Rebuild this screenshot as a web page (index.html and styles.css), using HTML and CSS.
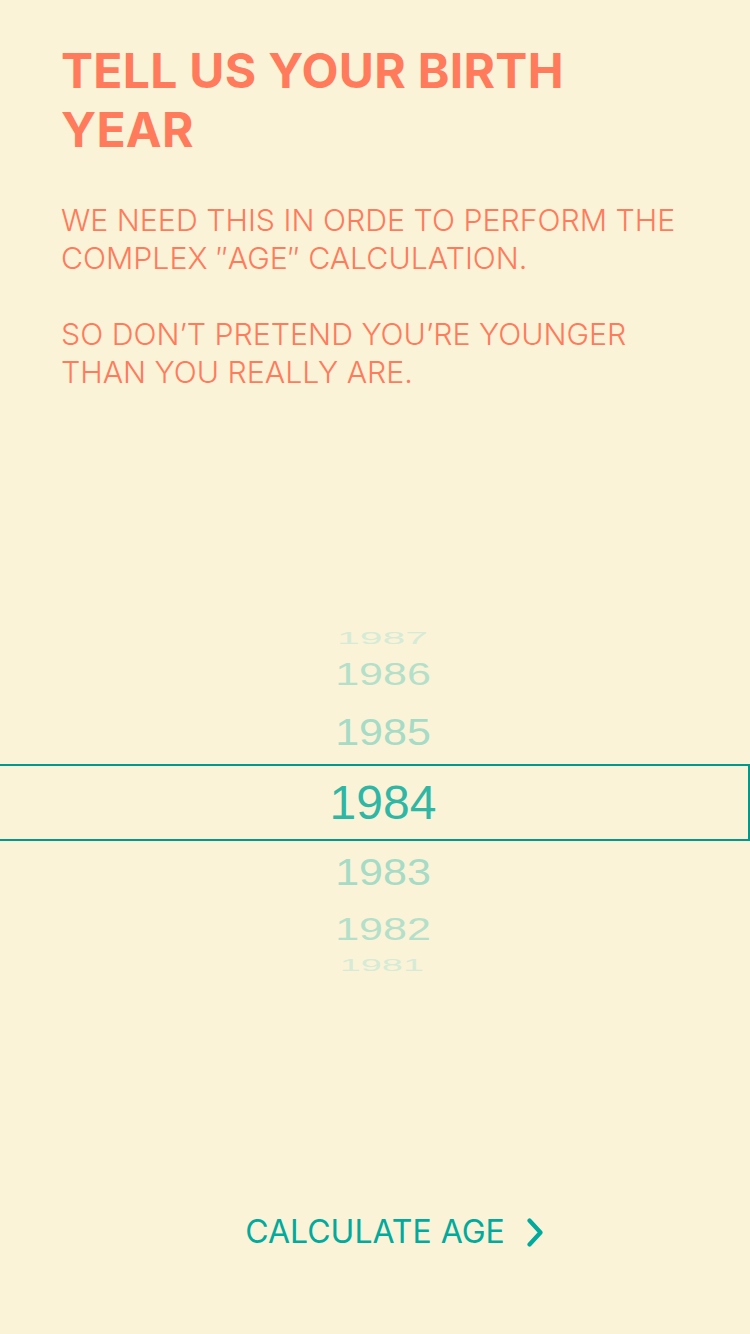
FILE: index.html
```html
<!DOCTYPE html>
<html lang="en">
<head>
<meta charset="utf-8">
<title>Birth year</title>
<link rel="stylesheet" href="styles.css">
</head>
<body>
<main class="screen">
  <header class="intro">
    <h1 class="title">TELL US YOUR BIRTH YEAR</h1>
    <p class="copy">WE NEED THIS IN ORDE TO PERFORM THE COMPLEX ″AGE″ CALCULATION.</p>
    <p class="copy copy-second">SO DON’T PRETEND YOU’RE YOUNGER THAN YOU REALLY ARE.</p>
  </header>

  <section class="picker" aria-label="Birth year">
    <div class="row row-far row-far-top"><span class="year">1987</span></div>
    <div class="row row-mid row-mid-top"><span class="year">1986</span></div>
    <div class="row row-near row-near-top"><span class="year">1985</span></div>
    <div class="row row-selected"><span class="year">1984</span></div>
    <div class="row row-near row-near-bottom"><span class="year">1983</span></div>
    <div class="row row-mid row-mid-bottom"><span class="year">1982</span></div>
    <div class="row row-far row-far-bottom"><span class="year">1981</span></div>
  </section>

  <footer class="actions">
    <button class="calc" type="button">
      <span class="calc-label">CALCULATE AGE</span>
      <svg class="chevron" width="16" height="29" viewBox="0 0 16 29" aria-hidden="true">
        <path d="M2.5 2.5 L13.5 14.5 L2.5 26.5" fill="none" stroke="currentColor" stroke-width="4.2" stroke-linecap="round" stroke-linejoin="round"/>
      </svg>
    </button>
  </footer>
</main>
</body>
</html>
```

FILE: styles.css
```css
html, body {
  margin: 0;
  padding: 0;
  background: #fbf3d8;
}

.screen {
  width: 750px;
  height: 1334px;
  overflow: hidden;
  display: flex;
  flex-direction: column;
  background: #fbf3d8;
}

.intro {
  padding: 41px 40px 0 61px;
}

.title {
  margin: 0;
  font-family: Inter, Roboto, "Liberation Sans", sans-serif;
  font-weight: 700;
  font-size: 48px;
  line-height: 59px;
  color: #ff7b5c;
  letter-spacing: 0.3px;
  width: 580px;
}

.copy {
  margin: 42px 0 0 0;
  font-family: Inter, Roboto, "Liberation Sans", sans-serif;
  font-weight: 300;
  font-size: 30.3px;
  line-height: 38px;
  color: #ff7b5c;
}

.copy-second {
  margin-top: 38px;
}

.picker {
  margin-top: 237px;
  display: flex;
  flex-direction: column;
}

.row {
  display: flex;
  align-items: center;
  justify-content: center;
  font-family: "Liberation Sans", Arial, sans-serif;
  font-size: 43px;
  line-height: 1;
}

.year {
  display: block;
  line-height: 1;
  padding-left: 16px;
}

.row-far { height: 20px; color: #d5ebd5; }
.row-mid { height: 52px; color: #b4e0ca; }
.row-near { height: 64px; color: #a6dbc6; }
.row-near-bottom { height: 62px; }

.row-far-top .year { transform: scale(0.95, 0.37); }
.row-mid-top .year { transform: scaleY(0.72); }
.row-near-top .year { transform: scaleY(0.84); }
.row-near-bottom .year { transform: scaleY(0.88); }
.row-mid-bottom .year { transform: scaleY(0.75); }
.row-far-bottom .year { transform: scale(0.88, 0.39); }

.row-selected {
  box-sizing: border-box;
  height: 77px;
  border-top: 2px solid #009a8c;
  border-bottom: 2px solid #009a8c;
  border-right: 2px solid #009a8c;
  font-size: 48px;
  color: #2fb7a6;
}

.row-selected .year {
  padding-left: 18px;
}

.actions {
  margin-top: auto;
  padding-bottom: 82px;
  display: flex;
  justify-content: center;
}

.calc {
  display: flex;
  align-items: center;
  gap: 22px;
  padding: 0 0 0 38px;
  margin: 0;
  border: 0;
  background: transparent;
  color: #00aa9c;
  font-family: Inter, Roboto, "Liberation Sans", sans-serif;
  font-weight: 400;
  font-size: 32px;
  line-height: 40px;
  cursor: pointer;
}

.chevron {
  display: block;
  flex: none;
  margin-top: 1px;
}
```
